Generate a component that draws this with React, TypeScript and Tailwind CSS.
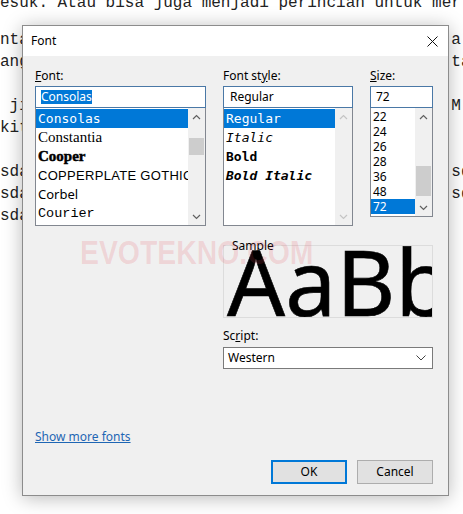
import React from "react";

const mk = (l: string, r: string) => l.padEnd(47, " ") + r;

const bgLines: string[] = [
  mk("nta", "a"),
  mk("ang", "ta"),
  "",
  mk(" ji", "M"),
  mk("kit", ""),
  "",
  mk("sda", "sd"),
  mk("sda", "sd"),
  mk("sda", ""),
];

function Chev({ up, color }: { up?: boolean; color: string }) {
  return (
    <svg width="9" height="6" viewBox="0 0 9 6">
      <polyline
        points={up ? "1,5 4.5,1.5 8,5" : "1,1 4.5,4.5 8,1"}
        fill="none"
        stroke={color}
        strokeWidth="1.2"
      />
    </svg>
  );
}

function ScrollBar({
  thumbClass,
  disabled,
}: {
  thumbClass?: string;
  disabled?: boolean;
}) {
  const c = disabled ? "#c4c4c4" : "#606060";
  return (
    <div className="w-[17px] flex flex-col bg-[#f0f0f0] shrink-0">
      <div className="h-[17px] flex items-center justify-center">
        <Chev up color={c} />
      </div>
      <div className="flex-1">
        {thumbClass && <div className={thumbClass} />}
      </div>
      <div className="h-[17px] flex items-center justify-center">
        <Chev color={c} />
      </div>
    </div>
  );
}

export default function App() {
  return (
    <div className="relative w-[463px] h-[514px] overflow-hidden bg-white">
      {/* background document text */}
      <div className="font-['Liberation_Mono',monospace] text-[16px] leading-[22px] text-[#222] whitespace-pre">
        <div className="mt-[-8px]">esuk. Atau bisa juga menjadi perincian untuk mer</div>
        <div className="h-[15px]" />
        {bgLines.map((l, i) => (
          <div key={i} className="h-[22px]">
            {l}
          </div>
        ))}
      </div>

      {/* Font dialog */}
      <div className="absolute left-[22px] top-[25px] w-[427px] h-[471px] border border-[#8c8c8c] bg-[#f0f0f0] shadow-[0_2px_18px_rgba(0,0,0,0.28)] flex flex-col font-['Noto_Sans',sans-serif] text-[12px] text-black">
        {/* title bar */}
        <div className="h-[30px] bg-white flex items-center justify-between pl-[8px] pr-[10px]">
          <span className="leading-[16px]">Font</span>
          <svg width="11" height="11" viewBox="0 0 11 11">
            <path d="M0.5 0.5 L10.5 10.5 M10.5 0.5 L0.5 10.5" stroke="#111" strokeWidth="1" />
          </svg>
        </div>

        {/* body */}
        <div className="flex flex-col pl-[12px] pr-[15px] pt-[12px]">
          <div className="flex gap-[17px]">
            {/* Font column */}
            <div className="w-[171px] flex flex-col">
              <div className="h-[16px] leading-[16px] mb-[2px]">
                <span className="underline">F</span>ont:
              </div>
              <div className="h-[22px] border border-[#4a78a6] bg-white flex items-center pl-[5px]">
                <span className="bg-[#0078d7] text-white leading-[14px]">Consolas</span>
              </div>
              <div className="h-[118px] border border-t-0 border-[#828790] bg-white flex">
                <div className="flex-1 min-w-0 pt-[1px]">
                  <div className="h-[19px] leading-[19px] bg-[#0078d7] text-white pl-[2px] whitespace-nowrap overflow-hidden font-['DejaVu_Sans_Mono',monospace] text-[13px]">
                    Consolas
                  </div>
                  <div className="h-[19px] leading-[19px] pl-[2px] whitespace-nowrap overflow-hidden font-['Liberation_Serif',serif] text-[15px]">
                    Constantia
                  </div>
                  <div className="h-[19px] leading-[19px] pl-[2px] whitespace-nowrap overflow-hidden font-['Liberation_Serif',serif] text-[15px] font-bold [-webkit-text-stroke:0.5px_black]">
                    Cooper
                  </div>
                  <div className="h-[19px] leading-[19px] pl-[2px] whitespace-nowrap overflow-hidden font-['Liberation_Sans',sans-serif] text-[13px] tracking-[0.3px]">
                    COPPERPLATE GOTHIC
                  </div>
                  <div className="h-[19px] leading-[19px] pl-[2px] whitespace-nowrap overflow-hidden font-['Noto_Sans',sans-serif] text-[13px]">
                    Corbel
                  </div>
                  <div className="h-[19px] leading-[19px] pl-[2px] whitespace-nowrap overflow-hidden font-['Liberation_Mono',monospace] text-[13.5px]">
                    Courier
                  </div>
                </div>
                <ScrollBar thumbClass="mt-[13px] h-[17px] mx-[1px] bg-[#cdcdcd]" />
              </div>
            </div>

            {/* Font style column */}
            <div className="w-[130px] flex flex-col">
              <div className="h-[16px] leading-[16px] mb-[2px]">
                Font st<span className="underline">y</span>le:
              </div>
              <div className="h-[22px] border border-[#4a78a6] bg-white flex items-center pl-[6px]">
                Regular
              </div>
              <div className="h-[118px] border border-t-0 border-[#828790] bg-white flex">
                <div className="flex-1 min-w-0 pt-[1px] font-['DejaVu_Sans_Mono',monospace] text-[13px]">
                  <div className="h-[19px] leading-[19px] bg-[#0078d7] text-white pl-[2px]">Regular</div>
                  <div className="h-[19px] leading-[19px] pl-[2px] italic">Italic</div>
                  <div className="h-[19px] leading-[19px] pl-[2px] font-bold">Bold</div>
                  <div className="h-[19px] leading-[19px] pl-[2px] font-bold italic">Bold Italic</div>
                </div>
                <ScrollBar disabled />
              </div>
            </div>

            {/* Size column */}
            <div className="w-[63px] flex flex-col">
              <div className="h-[16px] leading-[16px] mb-[2px]">
                <span className="underline">S</span>ize:
              </div>
              <div className="h-[22px] border border-[#4a78a6] bg-white flex items-center pl-[5px]">
                72
              </div>
              <div className="h-[109px] border border-t-0 border-[#828790] bg-white flex">
                <div className="flex-1 min-w-0 pt-[1px]">
                  {["22", "24", "26", "28", "36", "48"].map((s) => (
                    <div key={s} className="h-[15px] leading-[15px] pl-[2px]">
                      {s}
                    </div>
                  ))}
                  <div className="h-[15px] leading-[15px] pl-[2px] bg-[#0078d7] text-white">72</div>
                </div>
                <ScrollBar thumbClass="mt-[41px] h-[30px] mx-[1px] bg-[#cdcdcd]" />
              </div>
            </div>
          </div>

          {/* Sample + Script */}
          <div className="flex">
            <div className="w-[188px] shrink-0" />
            <div className="w-[210px] flex flex-col">
              <div className="relative mt-[19px] h-[73px] border border-[#dcdcdc]">
                <div className="h-full overflow-hidden">
                  <div className="mt-[-10px] pl-[3px] font-['Noto_Sans',sans-serif] text-[91px] leading-none whitespace-nowrap [-webkit-text-stroke:0.6px_black]">
                    AaBb
                  </div>
                </div>
                <div className="absolute left-[8px] top-[-8px] leading-[16px]">Sample</div>
              </div>
              <div className="mt-[10px] h-[16px] leading-[16px]">
                Sc<span className="underline">r</span>ipt:
              </div>
              <div className="mt-[3px] h-[22px] border border-[#7a7a7a] bg-white flex items-center justify-between pl-[4px] pr-[6px]">
                <span>Western</span>
                <svg width="10" height="6" viewBox="0 0 10 6">
                  <polyline points="0.5,0.5 5,5 9.5,0.5" fill="none" stroke="#444" strokeWidth="1" />
                </svg>
              </div>
            </div>
          </div>

          {/* link */}
          <div className="mt-[60px] h-[16px] leading-[16px]">
            <span className="text-[#1e66b4] underline">Show more fonts</span>
          </div>

          {/* buttons */}
          <div className="mt-[15px] flex justify-end gap-[10px]">
            <div className="w-[76px] h-[24px] border-2 border-[#0078d7] bg-[#e1e1e1] flex items-center justify-center">
              OK
            </div>
            <div className="w-[76px] h-[24px] border border-[#adadad] bg-[#e1e1e1] flex items-center justify-center">
              Cancel
            </div>
          </div>
        </div>
      </div>

      {/* watermark */}
      <div className="absolute left-[80px] top-[236px] pointer-events-none origin-left scale-x-[0.86] font-['Liberation_Sans',sans-serif] font-bold text-[33px] leading-none text-[rgba(230,70,85,0.16)] whitespace-nowrap">
        EVOTEKNO.COM
      </div>
    </div>
  );
}
